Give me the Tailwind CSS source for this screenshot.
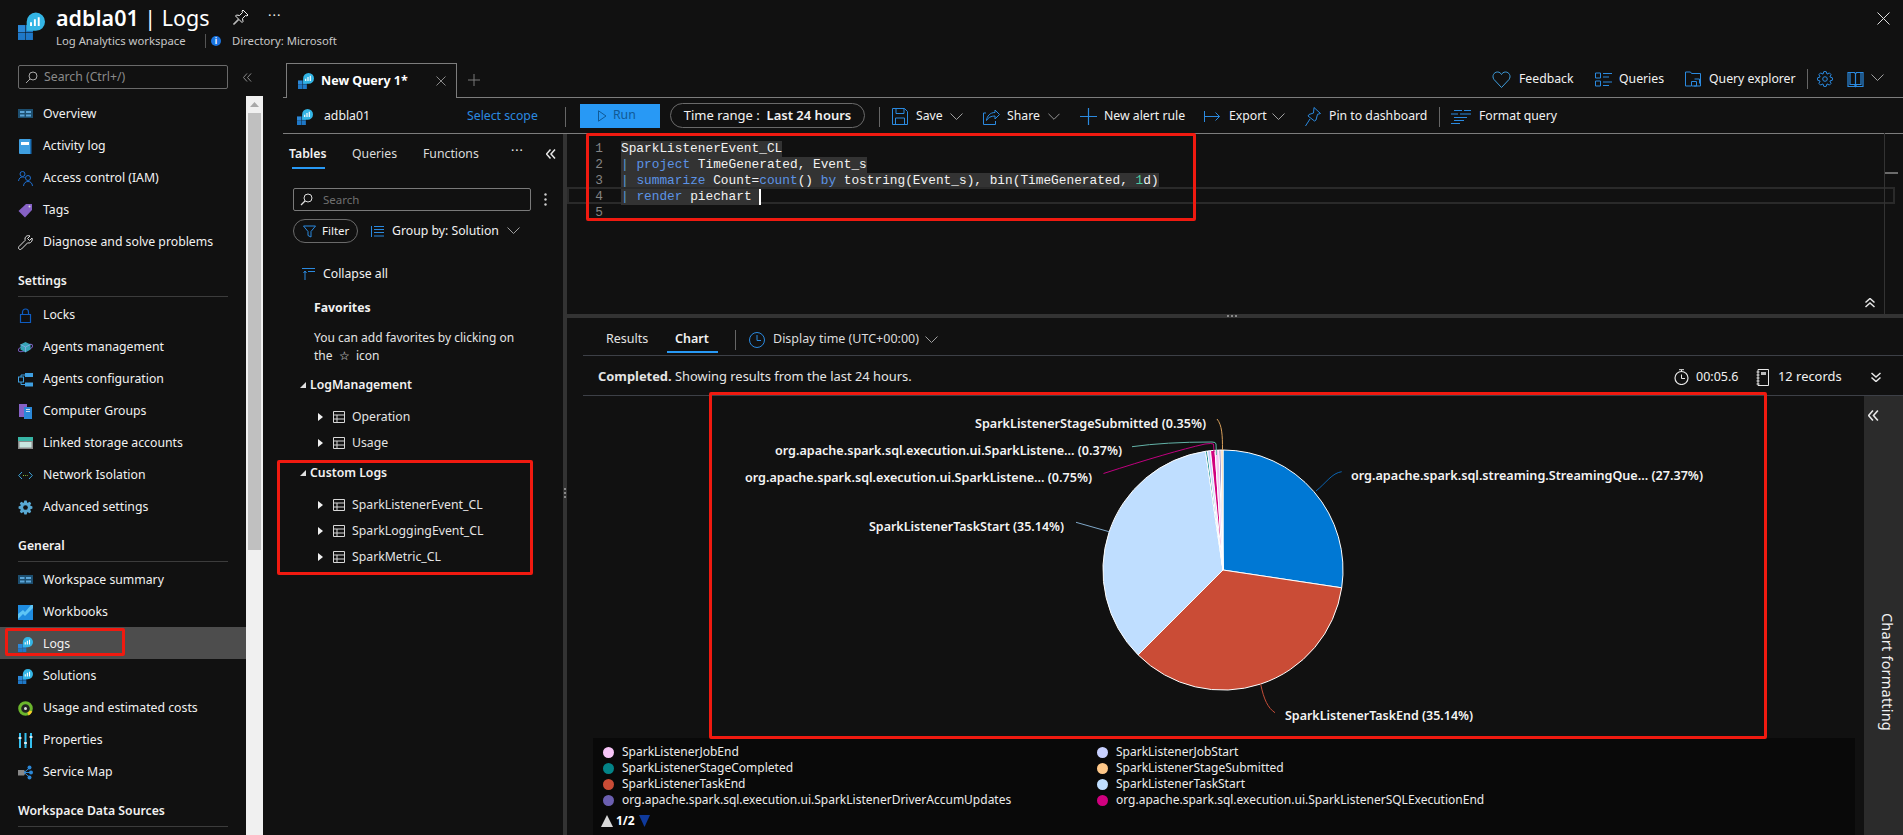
<!DOCTYPE html>
<html lang="en"><head><meta charset="utf-8"><title>adbla01 | Logs</title>
<script src="https://cdn.jsdelivr.net/npm/@tailwindcss/browser@4"></script></head>
<body class="bg-[#111111]">
<svg width="0" height="0" class="absolute">
<defs>
<symbol id="logo" viewBox="0 0 28 28"><rect x="0" y="13" width="7.5" height="7.5" fill="#2b88d8"/><rect x="0" y="21" width="7.5" height="7.5" fill="#1f78c8"/><rect x="8" y="21" width="7.5" height="7.5" fill="#1f78c8"/><rect x="8" y="13" width="7.5" height="7.5" fill="#1f78c8"/><path d="M18.5 0a9.5 9.5 0 0 1 0 19H9v-9.5A9.5 9.5 0 0 1 18.5 0z" fill="#33b5e5"/><path d="M13.500 14V10M17.500 14V7M21.500 14V5" stroke="#fff" stroke-width="2"/></symbol>
<symbol id="tbl" viewBox="0 0 12 12"><path d="M.5.5h11v11H.5zM.5 4h11M.5 8h11M4 4v7.500" fill="none" stroke="#d8d8d8" stroke-width="1"/></symbol>
<symbol id="chev" viewBox="0 0 13 8"><path d="M.5.5l6 6 6-6" fill="none" stroke="#a0a0a0" stroke-width="1"/></symbol>
<symbol id="dbl" viewBox="0 0 10 10"><path d="M4.500.5L.5 5l4 4.500M9 .5L5 5l4 4.500" fill="none" stroke="#e8e8e8" stroke-width="1.500"/></symbol>
</defs></svg>
<div class="relative w-[1903px] h-[835px] overflow-hidden flex flex-col bg-[#111111] text-[#f2f2f2] text-[12.25px] font-['Noto_Sans',sans-serif]">

<header class="h-[58px] shrink-0 flex pl-[18px] pr-[13px]">
  <svg class="w-[27px] h-[28px] mt-[12px]"><use href="#logo"/></svg>
  <div class="ml-[11px] flex flex-col">
    <div class="flex items-center h-[34px] pt-[2px]">
      <div class="w-[177px] text-[21.500px] text-white whitespace-nowrap"><span class="font-semibold">adbla01</span> | Logs</div>
      <svg class="w-[16px] h-[16px] mt-[-2px]" viewBox="0 0 16 16"><path d="M10 1l5 5-1 1-1.500-.5-3 3 .5 3-1 1-3-3-5 5-.5-.5 5-5-3-3 1-1 3 .5 3-3L9 2z" fill="none" stroke="#f0f0f0" stroke-width="1"/></svg>
      <div class="ml-[19px] mt-[-4px] text-[13px] tracking-[1px]">···</div>
    </div>
    <div class="flex items-center text-[11.300px] text-[#c8c8c8] mt-[-1px]">
      <span class="w-[149px] whitespace-nowrap">Log Analytics workspace</span>
      <span class="w-px h-[14px] bg-[#555]"></span>
      <span class="ml-[5px] w-[10px] h-[10px] rounded-full bg-[#1a73e0] text-white text-[8px] leading-[10px] text-center font-bold">i</span>
      <span class="ml-[11px] whitespace-nowrap">Directory: Microsoft</span>
    </div>
  </div>
  <svg class="ml-auto mt-[12px] w-[13px] h-[13px]" viewBox="0 0 13 13"><path d="M.5.5l12 12M12.500.5l-12 12" stroke="#e0e0e0" stroke-width="1"/></svg>
</header>

<div class="flex flex-1 min-h-0">
  <!-- blade menu -->
  <aside class="w-[246px] shrink-0 flex flex-col">
    <div class="flex items-center pl-[18px] h-[24px] mt-[7px]">
      <div class="w-[210px] shrink-0 h-[24px] border border-[#6a6a6a] rounded-[2px] flex items-center pl-[6px] text-[#8a8a8a]">
        <svg class="w-[13px] h-[13px]" viewBox="0 0 13 13"><circle cx="8" cy="5" r="4" fill="none" stroke="#aaa"/><path d="M5 8l-4 4" stroke="#aaa"/></svg>
        <span class="ml-[6px]">Search (Ctrl+/)</span>
      </div>
      <svg class="ml-[15px] shrink-0 w-[9px] h-[9px]" viewBox="0 0 10 10"><path d="M4.500.5L.5 5l4 4.500M9 .5L5 5l4 4.500" fill="none" stroke="#999" stroke-width="1"/></svg>
    </div>
    <nav class="mt-[8px]">
      <a class="flex items-center h-8 pl-[18px] pt-[2px]"><svg class="w-[15px] h-[15px] mr-[10px]" viewBox="0 0 15 15"><rect y="2" width="15" height="9" fill="#1d4f70"/><path d="M2 4h4.500v2H2zM8 4h5v2H8zM2 7.500h4.500v2H2zM8 7.500h5v2H8z" fill="#5ba5d8"/></svg>Overview</a>
      <a class="flex items-center h-8 pl-[18px] pt-[2px]"><svg class="w-[15px] h-[15px] mr-[10px]" viewBox="0 0 15 15"><rect x="1" width="12" height="15" rx="1" fill="#3f9fe0"/><rect x="3" y="3" width="8" height="3" fill="#fff"/><rect x="12" width="1.500" height="15" fill="#1a6fb5"/></svg>Activity log</a>
      <a class="flex items-center h-8 pl-[18px] pt-[2px]"><svg class="w-[15px] h-[15px] mr-[10px]" viewBox="0 0 15 15"><g fill="none" stroke="#1f6fd0" stroke-width="1"><circle cx="4.500" cy="3" r="2.500"/><path d="M.5 10c.5-3 2-4 4-4 1 0 1.500.2 2 .5"/><circle cx="10" cy="7" r="2.500"/><path d="M5.500 15c.3-3 2-4.500 4.500-4.500s4.200 1.500 4.500 4.500"/></g></svg>Access control (IAM)</a>
      <a class="flex items-center h-8 pl-[18px] pt-[2px]"><svg class="w-[15px] h-[15px] mr-[10px]" viewBox="0 0 15 15"><path d="M8 1h6v6l-7 7.500L.5 8z" fill="#8661c5"/><circle cx="11.500" cy="3.500" r="1" fill="#ddd"/></svg>Tags</a>
      <a class="flex items-center h-8 pl-[18px] pt-[2px]"><svg class="w-[15px] h-[15px] mr-[10px]" viewBox="0 0 15 15"><path d="M14 3l-2.500 2.500-2-2L12 1c-2-1-5 0-5 3 0 .6.100 1 .2 1.300L1 11.500c-1 1-.5 2 0 2.500s1.500 1 2.500 0l6.200-6.200c3 1 5.300-2 4.300-4.800z" fill="none" stroke="#e0e0e0"/></svg>Diagnose and solve problems</a>

      <div class="mx-[18px] mb-px pt-[15px] pb-[6px] leading-[18px] font-semibold border-b border-[#3c3c3c]">Settings</div>
      <a class="flex items-center h-8 pl-[18px] pt-[2px]"><svg class="w-[15px] h-[15px] mr-[10px]" viewBox="0 0 15 15"><path d="M2.500 6.500h10v8h-10zM4.500 6.500V4a3 3 0 0 1 6 0v2.500" fill="none" stroke="#0f5cc0" stroke-width="1.200"/></svg>Locks</a>
      <a class="flex items-center h-8 pl-[18px] pt-[2px]"><svg class="w-[15px] h-[15px] mr-[10px]" viewBox="0 0 15 15"><ellipse cx="7.500" cy="8" rx="7.500" ry="2.500" transform="rotate(-20 7.500 8)" fill="none" stroke="#7a5cc0"/><path d="M7.500 2l5 2.500v5l-5 3-5-3v-5z" fill="#38a5b8"/><path d="M2.500 4.500l5 2.500 5-2.500M7.500 7v5" stroke="#9ae" stroke-width=".7" fill="none"/></svg>Agents management</a>
      <a class="flex items-center h-8 pl-[18px] pt-[2px]"><svg class="w-[15px] h-[15px] mr-[10px]" viewBox="0 0 15 15"><rect x="0.500" y="5" width="5" height="5" fill="none" stroke="#3f9fe0"/><rect x="7" y="1" width="8" height="4" fill="#3f9fe0"/><rect x="7" y="10.500" width="8" height="4" fill="#3f9fe0"/><path d="M3 5V3h4M3 10v2.500h4" fill="none" stroke="#3f9fe0"/></svg>Agents configuration</a>
      <a class="flex items-center h-8 pl-[18px] pt-[2px]"><svg class="w-[15px] h-[15px] mr-[10px]" viewBox="0 0 15 15"><rect x="1" y="0" width="8" height="13" fill="#8661c5"/><rect x="6" y="3" width="8" height="12" fill="#2b88d8"/><path d="M8 5.500h4M8 7.500h4" stroke="#cde" stroke-width="1"/></svg>Computer Groups</a>
      <a class="flex items-center h-8 pl-[18px] pt-[2px]"><svg class="w-[15px] h-[15px] mr-[10px]" viewBox="0 0 15 15"><rect y="1" width="15" height="12" fill="#8a8a8a"/><rect y="1" width="15" height="4" fill="#37b5a5"/><rect x="1.500" y="6" width="12" height="5.500" fill="#c8e6e0"/></svg>Linked storage accounts</a>
      <a class="flex items-center h-8 pl-[18px] pt-[2px]"><svg class="w-[15px] h-[15px] mr-[10px]" viewBox="0 0 15 15"><path d="M4 4L.7 7.500 4 11M11 4l3.300 3.500L11 11" fill="none" stroke="#3fa5dc"/><path d="M5 7.500h5" stroke="#8fc83c" stroke-dasharray="1 1.200"/></svg>Network Isolation</a>
      <a class="flex items-center h-8 pl-[18px] pt-[2px]"><svg class="w-[15px] h-[15px] mr-[10px]" viewBox="0 0 16 16"><path d="M9.170.59L10.030 3.100 12.410 1.930 14.070 3.590 12.900 5.970 15.410 6.830V9.170L12.900 10.030 14.070 12.410 12.410 14.070 10.030 12.900 9.170 15.410H6.830L5.970 12.900 3.590 14.070 1.930 12.410 3.100 10.030.59 9.170V6.830L3.100 5.970 1.930 3.590 3.590 1.930 5.970 3.100 6.830.59z" fill="#58a9d4"/><circle cx="8" cy="8" r="2.500" fill="#111111"/></svg>Advanced settings</a>

      <div class="mx-[18px] mb-px pt-[15px] pb-[6px] leading-[18px] font-semibold border-b border-[#3c3c3c]">General</div>
      <a class="flex items-center h-8 pl-[18px] pt-[2px]"><svg class="w-[15px] h-[15px] mr-[10px]" viewBox="0 0 15 15"><rect y="2" width="15" height="9" fill="#1d4f70"/><path d="M2 4h4.500v2H2zM8 4h5v2H8zM2 7.500h4.500v2H2zM8 7.500h5v2H8z" fill="#5ba5d8"/></svg>Workspace summary</a>
      <a class="flex items-center h-8 pl-[18px] pt-[2px]"><svg class="w-[15px] h-[15px] mr-[10px]" viewBox="0 0 15 15"><rect width="15" height="15" fill="#1f8ce0"/><path d="M0 9l5-4 2 2 6-7h2v3L7 11 5 9l-5 5z" fill="#5ec5f5"/></svg>Workbooks</a>
      <a class="flex items-center h-8 pl-[18px] pt-[2px] bg-[#4d4d4d]"><svg class="w-[15px] h-[15px] mr-[10px]"><use href="#logo"/></svg>Logs</a>
      <a class="flex items-center h-8 pl-[18px] pt-[2px]"><svg class="w-[15px] h-[15px] mr-[10px]"><use href="#logo"/></svg>Solutions</a>
      <a class="flex items-center h-8 pl-[18px] pt-[2px]"><svg class="w-[15px] h-[15px] mr-[10px]" viewBox="0 0 15 15"><circle cx="7.500" cy="7.500" r="5.800" fill="#222" stroke="#6bb52c" stroke-width="3"/><path d="M13 10a5.800 5.800 0 0 1-3 3" fill="none" stroke="#f5cb2a" stroke-width="3"/><circle cx="7.500" cy="7.500" r="1.500" fill="#ddd"/></svg>Usage and estimated costs</a>
      <a class="flex items-center h-8 pl-[18px] pt-[2px]"><svg class="w-[15px] h-[15px] mr-[10px]" viewBox="0 0 15 15"><path d="M2 0v15M7.500 0v15M13 0v15" stroke="#35c0ef" stroke-width="2"/><path d="M.5 5h3M6 10h3M11.500 4h3" stroke="#fff" stroke-width="1.500"/></svg>Properties</a>
      <a class="flex items-center h-8 pl-[18px] pt-[2px]"><svg class="w-[15px] h-[15px] mr-[10px]" viewBox="0 0 15 15"><path d="M0 5h6l2 2.500-2 3H0z" fill="#888"/><path d="M6 7.500l6-5M6 7.500h7M6 7.500l6 5" stroke="#2b88d8"/><circle cx="11.500" cy="2.500" r="2" fill="#2b88d8"/><circle cx="13" cy="7.500" r="2" fill="#2b88d8"/><circle cx="11.500" cy="12.500" r="2" fill="#2b88d8"/></svg>Service Map</a>

      <div class="mx-[18px] pt-[15px] pb-[6px] leading-[18px] font-semibold border-b border-[#3c3c3c] whitespace-nowrap">Workspace Data Sources</div>
    </nav>
  </aside>
  <!-- scrollbar -->
  <div class="w-[17px] shrink-0 mt-[38px] bg-[#f0f0f0] flex flex-col items-center">
    <svg class="mt-[6px] w-[9px] h-[5px]" viewBox="0 0 9 5"><path d="M4.500 0l4.500 5H0z" fill="#a8a8a8"/></svg>
    <div class="mt-[6px] w-[13px] h-[437px] bg-[#c0c0c0]"></div>
  </div>

  <!-- main -->
  <main class="ml-[20px] flex-1 min-w-0 flex flex-col">
    <div class="h-[40px] shrink-0 border-b border-[#7d7d7d] flex items-end pr-[19px]">
      <div class="relative top-px ml-[3px] w-[171px] h-[35px] border border-b-0 border-[#7d7d7d] bg-[#111111] flex items-center pl-[11px]">
        <svg class="w-[16px] h-[16px]"><use href="#logo"/></svg>
        <span class="ml-[7px] font-bold w-[115px] whitespace-nowrap text-white text-[12.500px]">New Query 1*</span>
        <svg class="w-[10px] h-[10px]" viewBox="0 0 10 10"><path d="M.5.5l9 9M9.500.5l-9 9" stroke="#8a8a8a"/></svg>
      </div>
      <svg class="ml-[11px] mb-[11px] w-[12px] h-[12px]" viewBox="0 0 12 12"><path d="M6 0v12M0 6h12" stroke="#7a7a7a"/></svg>
      <div class="flex-1"></div>
      <div class="flex items-center h-[39px] pt-[3px]">
        <svg class="w-[19px] h-[19px]" viewBox="0 0 19 19"><path d="M9.500 17.500L2 9.500C-.5 6 2 2 5.500 2c2 0 3.200 1.200 4 2.500C10.300 3.200 11.500 2 13.500 2 17 2 19.500 6 17 9.500z" fill="none" stroke="#3f9fe0"/></svg>
        <span class="ml-[8px] w-[76px] whitespace-nowrap">Feedback</span>
        <svg class="w-[17px] h-[15px]" viewBox="0 0 17 15"><path d="M.5 1h5v5h-5zM.5 9h5v5h-5z" fill="none" stroke="#2b8ae0"/><path d="M8 1.500h9M8 5h6M8 10h9M8 13.500h6" stroke="#2b8ae0"/></svg>
        <span class="ml-[7px] w-[66px] whitespace-nowrap">Queries</span>
        <svg class="w-[16px] h-[16px]" viewBox="0 0 16 16"><path d="M.5 15V1h5l1 1.500h9V15H9M.5 15H6" fill="none" stroke="#2b8ae0"/><path d="M6.500 10.500h5v4.500h-5zM9.500 8h5v4.500" fill="none" stroke="#2b8ae0"/></svg>
        <span class="ml-[8px] w-[98px] whitespace-nowrap">Query explorer</span>
        <span class="w-px h-[20px] bg-[#666]"></span>
        <svg class="ml-[9px] w-[16px] h-[16px]" viewBox="0 0 16 16"><path d="M9.170.59L10.030 3.100 12.410 1.930 14.070 3.590 12.900 5.970 15.410 6.830V9.170L12.900 10.030 14.070 12.410 12.410 14.070 10.030 12.900 9.170 15.410H6.830L5.970 12.900 3.590 14.070 1.930 12.410 3.100 10.030.59 9.170V6.830L3.100 5.970 1.930 3.590 3.590 1.930 5.970 3.100 6.830.59z" fill="none" stroke="#2b8ae0"/><circle cx="8" cy="8" r="2.300" fill="none" stroke="#2b8ae0"/></svg>
        <svg class="ml-[14px] w-[17px] h-[17px]" viewBox="0 0 17 17"><path d="M1 1.500h6.500L8.500 3l1-1.500H16V15.500H1zM8.500 3v12.500M3 1.500V13.500H7.500L8.500 15.500 9.500 13.500H14V1.500" fill="none" stroke="#2b8ae0" stroke-width="1.200"/></svg>
        <svg class="ml-[7px] mb-[3px] w-[13px] h-[8px]"><use href="#chev"/></svg>
      </div>
    </div>

    <div class="h-[36px] shrink-0 border-b border-[#7d7d7d] flex items-center pt-[2px] whitespace-nowrap">
      <svg class="ml-[14px] w-[16px] h-[16px]"><use href="#logo"/></svg>
      <span class="ml-[11px] w-[143px]">adbla01</span>
      <span class="w-[98px] text-[#2b8ae0]">Select scope</span>
      <span class="w-px h-[20px] bg-[#666]"></span>
      <div class="ml-[14px] mt-[-2px] w-[80px] h-[24px] bg-[#2899f5] flex items-center pl-[18px] text-[#105a96]">
        <svg class="w-[9px] h-[12px]" viewBox="0 0 9 12"><path d="M.5.8l7.500 5.200L.5 11.200z" fill="none" stroke="#105a96"/></svg>
        <span class="ml-[6px]">Run</span>
      </div>
      <div class="ml-[10px] mt-[-2px] w-[195px] h-[25px] rounded-full border border-[#6a6a6a] flex items-center justify-center text-[13px]"><span>Time range :&nbsp;&nbsp;<span class="font-semibold">Last 24 hours</span></span></div>
      <span class="ml-[14px] w-px h-[20px] bg-[#666]"></span>
      <svg class="ml-[12px] w-[16px] h-[17px]" viewBox="0 0 16 17"><path d="M.5.5h12l3 3v13H.5zM4 .5v5h8v-5M3.500 16.500V10h9v6.500" fill="none" stroke="#2b8ae0"/></svg>
      <span class="ml-[8px] w-[34px]">Save</span>
      <svg class="w-[13px] h-[8px]"><use href="#chev"/></svg>
      <svg class="ml-[20px] w-[17px] h-[16px]" viewBox="0 0 17 16"><path d="M12 1l4.500 4.500L12 10V7C8 7 5 8.500 3.500 11.500 4 7 7 3.500 12 3.500zM3 4H.5v11.500h12V12" fill="none" stroke="#2b8ae0"/></svg>
      <span class="ml-[7px] w-[41px]">Share</span>
      <svg class="w-[12px] h-[8px]"><use href="#chev"/></svg>
      <svg class="ml-[20px] w-[17px] h-[17px]" viewBox="0 0 17 17"><path d="M8.500 0v17M0 8.500h17" stroke="#2b8ae0" stroke-width="1.200"/></svg>
      <span class="ml-[7px] w-[100px]">New alert rule</span>
      <svg class="w-[17px] h-[11px]" viewBox="0 0 17 11"><path d="M.5 0v11M.5 5.500h15M11.500 1.500l4 4-4 4" fill="none" stroke="#2b8ae0"/></svg>
      <span class="ml-[8px] w-[43px]">Export</span>
      <svg class="w-[13px] h-[8px]"><use href="#chev"/></svg>
      <svg class="ml-[20px] w-[16px] h-[20px]" viewBox="0 0 16 20"><path d="M9 .5l6.500 6-3 .8-1.500 5.700-1.500 1L3 9l1-1.500L8.500 6zM5 12L.5 19" fill="none" stroke="#2b8ae0"/></svg>
      <span class="ml-[8px] w-[110px]">Pin to dashboard</span>
      <span class="w-px h-[20px] bg-[#666]"></span>
      <svg class="ml-[11px] w-[20px] h-[14px]" viewBox="0 0 20 14"><path d="M3 .5h8M13 .5h7M0 4h7M9 4h11M3 7.500h13M3 10.500h10M0 13.500h9" stroke="#2b8ae0"/></svg>
      <span class="ml-[8px]">Format query</span>
    </div>

    <div class="flex flex-1 min-h-0">
      <!-- schema pane -->
      <section class="w-[280px] shrink-0 flex flex-col whitespace-nowrap">
        <div class="h-[36px] flex items-center pl-[6px] pt-[4px] relative">
          <span class="w-[63px] font-semibold relative"><span>Tables</span><span class="absolute left-[3px] top-[22px] w-[33px] h-[2px] bg-[#2899f5]"></span></span>
          <span class="w-[71px] text-[#dcdcdc]">Queries</span>
          <span class="w-[88px] text-[#dcdcdc]">Functions</span>
          <span class="w-[35px] mt-[-5px] tracking-[1px]">···</span>
          <svg class="w-[10px] h-[10px]"><use href="#dbl"/></svg>
        </div>
        <div class="ml-[10px] mt-[18px] flex items-center">
          <div class="w-[238px] h-[23px] border border-[#7a7a7a] rounded-[2px] flex items-center pl-[6px] text-[#6f6f6f] text-[11.500px]">
            <svg class="w-[13px] h-[13px]" viewBox="0 0 13 13"><circle cx="8" cy="5" r="4" fill="none" stroke="#ddd"/><path d="M5 8l-4 4" stroke="#ddd" stroke-width="1.300"/></svg>
            <span class="ml-[10px]">Search</span>
          </div>
          <svg class="ml-[13px] w-[3px] h-[13px]" viewBox="0 0 3 13"><circle cx="1.500" cy="1.500" r="1.200" fill="#ccc"/><circle cx="1.500" cy="6.500" r="1.200" fill="#ccc"/><circle cx="1.500" cy="11.500" r="1.200" fill="#ccc"/></svg>
        </div>
        <div class="ml-[10px] mt-[8px] flex items-center">
          <div class="w-[65px] h-[24px] rounded-full border border-[#6a6a6a] flex items-center pl-[9px] text-[11.500px]">
            <svg class="w-[13px] h-[13px]" viewBox="0 0 13 13"><path d="M.5 1h12L8 6.500V12L5 10.500v-4z" fill="none" stroke="#2b8ae0"/></svg>
            <span class="ml-[6px]">Filter</span>
          </div>
          <svg class="ml-[13px] w-[13px] h-[11px]" viewBox="0 0 13 11"><path d="M.5 0v11M3 .5h10M3 3.500h10M3 6.500h10M3 10h10" stroke="#2b8ae0"/></svg>
          <span class="ml-[8px] w-[115px]">Group by: Solution</span>
          <svg class="w-[13px] h-[8px]"><use href="#chev"/></svg>
        </div>
        <div class="ml-[19px] mt-[20px] h-[20px] pt-[2px] flex items-center">
          <svg class="w-[13px] h-[12px]" viewBox="0 0 13 12"><path d="M0 .5h13M3 3v9M1.500 5L3 3l1.500 2M6 3.500h7" fill="none" stroke="#2b8ae0"/></svg>
          <span class="ml-[8px]">Collapse all</span>
        </div>
        <div class="ml-[31px] mt-[14px] h-[20px] pt-px leading-[20px] font-bold">Favorites</div>
        <div class="ml-[31px] mt-[12px] leading-[18px] text-[12px] text-[#e4e4e4]">You can add favorites by clicking on<br>the &nbsp;☆&nbsp; icon</div>
        <div class="ml-[17px] mt-[9px] h-[20px] pt-[2px] flex items-center font-semibold"><span class="w-0 h-0 border-l-[6px] border-l-transparent border-b-[6px] border-b-[#e0e0e0]"></span><span class="ml-[4px]">LogManagement</span></div>
        <div class="mt-[10px] ml-[35px] h-[26px] flex items-center"><span class="w-0 h-0 border-y-[4px] border-y-transparent border-l-[5px] border-l-[#f0f0f0]"></span><svg class="ml-[10px] w-[12px] h-[12px]"><use href="#tbl"/></svg><span class="ml-[7px] text-[#e4e4e4]">Operation</span></div>
        <div class="ml-[35px] h-[26px] flex items-center"><span class="w-0 h-0 border-y-[4px] border-y-transparent border-l-[5px] border-l-[#f0f0f0]"></span><svg class="ml-[10px] w-[12px] h-[12px]"><use href="#tbl"/></svg><span class="ml-[7px] text-[#e4e4e4]">Usage</span></div>
        <div class="ml-[17px] mt-[6px] h-[20px] pt-[2px] flex items-center font-semibold"><span class="w-0 h-0 border-l-[6px] border-l-transparent border-b-[6px] border-b-[#e0e0e0]"></span><span class="ml-[4px]">Custom Logs</span></div>
        <div class="mt-[10px] ml-[35px] h-[26px] flex items-center"><span class="w-0 h-0 border-y-[4px] border-y-transparent border-l-[5px] border-l-[#f0f0f0]"></span><svg class="ml-[10px] w-[12px] h-[12px]"><use href="#tbl"/></svg><span class="ml-[7px] text-[#e4e4e4]">SparkListenerEvent_CL</span></div>
        <div class="ml-[35px] h-[26px] flex items-center"><span class="w-0 h-0 border-y-[4px] border-y-transparent border-l-[5px] border-l-[#f0f0f0]"></span><svg class="ml-[10px] w-[12px] h-[12px]"><use href="#tbl"/></svg><span class="ml-[7px] text-[#e4e4e4]">SparkLoggingEvent_CL</span></div>
        <div class="ml-[35px] h-[26px] flex items-center"><span class="w-0 h-0 border-y-[4px] border-y-transparent border-l-[5px] border-l-[#f0f0f0]"></span><svg class="ml-[10px] w-[12px] h-[12px]"><use href="#tbl"/></svg><span class="ml-[7px] text-[#e4e4e4]">SparkMetric_CL</span></div>
      </section>
      <!-- vertical splitter -->
      <div class="w-[4px] shrink-0 bg-[#333333] flex flex-col items-center gap-[2px] pt-[354px]"><i class="w-[2px] h-[2px] bg-[#888]"></i><i class="w-[2px] h-[2px] bg-[#888]"></i><i class="w-[2px] h-[2px] bg-[#888]"></i></div>

      <div class="flex-1 min-w-0 flex flex-col">
        <!-- editor -->
        <div class="relative h-[180px] shrink-0 pt-[7px] font-['Liberation_Mono',monospace] text-[12.800px] leading-[16px]">
          <div class="flex h-[16px]"><span class="w-[36px] text-right text-[#858585]">1</span><span class="ml-[18px] bg-[#333333] whitespace-pre">SparkListenerEvent_CL</span></div>
          <div class="flex h-[16px]"><span class="w-[36px] text-right text-[#858585]">2</span><span class="ml-[18px] bg-[#333333] whitespace-pre"><span class="text-[#5b9bd5]">|</span> <span class="text-[#5c93e6]">project</span> TimeGenerated, Event_s</span></div>
          <div class="flex h-[16px]"><span class="w-[36px] text-right text-[#858585]">3</span><span class="ml-[18px] bg-[#333333] whitespace-pre"><span class="text-[#5b9bd5]">|</span> <span class="text-[#5c93e6]">summarize</span> Count=<span class="text-[#5c93e6]">count</span>() <span class="text-[#5c93e6]">by</span> tostring(Event_s), bin(TimeGenerated, <span class="text-[#4ec9a0]">1</span>d)</span></div>
          <div class="flex h-[16px] relative z-10"><span class="w-[36px] text-right text-[#858585]">4</span><span class="ml-[18px] bg-[#333333] whitespace-pre"><span class="text-[#5b9bd5]">|</span> <span class="text-[#5c93e6]">render</span> piechart </span><span class="w-[2px] h-[16px] bg-white"></span></div>
          <div class="flex h-[16px]"><span class="w-[36px] text-right text-[#858585]">5</span></div>
          <div class="absolute left-0 top-[53px] w-[1328px] h-[17px] border-2 border-[#2a2a2a]"></div>
          <div class="absolute left-[1317px] top-[-1px] w-px h-[181px] bg-[#333333]"></div>
          <div class="absolute left-[1318px] top-[38px] w-[13px] h-[2px] bg-[#6b6b6b]"></div>
          <svg class="absolute left-[1298px] top-[164px] w-[10px] h-[10px]" viewBox="0 0 10 10"><path d="M.5 4.500L5 .5l4.500 4M.5 9L5 5l4.500 4" fill="none" stroke="#e8e8e8" stroke-width="1.500"/></svg>
        </div>
        <!-- horizontal splitter -->
        <div class="h-[4px] shrink-0 bg-[#333333] flex justify-center items-center gap-[2px] pr-[7px]"><i class="w-[2px] h-[2px] bg-[#888]"></i><i class="w-[2px] h-[2px] bg-[#888]"></i><i class="w-[2px] h-[2px] bg-[#888]"></i></div>
        <!-- results -->
        <div class="flex-1 min-h-0 pl-[16px] flex flex-col whitespace-nowrap">
          <div class="h-[38px] shrink-0 border-b border-[#3d4047] flex items-center pt-[6px]">
            <span class="ml-[23px] w-[69px] text-[#e4e4e4] text-[12.500px]">Results</span>
            <span class="w-[60px] font-semibold relative text-[12.500px]">Chart<span class="absolute left-[-8px] top-[21px] w-[51px] h-[2px] bg-[#2899f5]"></span></span>
            <span class="w-px h-[20px] bg-[#666]"></span>
            <svg class="ml-[13px] w-[16px] h-[16px]" viewBox="0 0 16 16"><circle cx="8" cy="8" r="7.500" fill="none" stroke="#2b8ae0"/><path d="M8 3v5.500h4" fill="none" stroke="#2b8ae0"/></svg>
            <span class="ml-[8px] w-[152px] text-[#dcdcdc] text-[12.500px]">Display time (UTC+00:00)</span>
            <svg class="w-[13px] h-[8px]"><use href="#chev"/></svg>
          </div>
          <div class="h-[40px] shrink-0 border-b border-[#3d4047] flex items-center pl-[15px] pt-[3px] text-[12.900px]">
            <span class="w-[1076px] text-[#e4e4e4]"><span class="font-bold">Completed.</span> Showing results from the last 24 hours.</span>
            <svg class="w-[15px] h-[16px]" viewBox="0 0 15 16"><circle cx="7.500" cy="9" r="6.500" fill="none" stroke="#e8e8e8" stroke-width="1.200"/><path d="M5 .7h5M7.500 1v2M7.500 5.500V9.500H11" fill="none" stroke="#e8e8e8"/></svg>
            <span class="ml-[7px] w-[60px] text-[12.500px]">00:05.6</span>
            <svg class="w-[13px] h-[17px]" viewBox="0 0 13 17"><path d="M2 .5h10.500v16H2zM.5 3h3M.5 6h3M.5 9h3M.5 12h3M.5 15h3" fill="none" stroke="#e8e8e8"/><rect x="5" y="3" width="5" height="3" fill="#bbb"/></svg>
            <span class="ml-[9px] w-[93px]">12 records</span>
            <svg class="w-[10px] h-[10px]" viewBox="0 0 10 10"><path d="M.5 1L5 5l4.500-4M.5 5.500L5 9.500l4.500-4" fill="none" stroke="#e8e8e8" stroke-width="1.500"/></svg>
          </div>
          <div class="flex-1 min-h-0 flex">
            <div class="relative flex-1 min-w-0 flex flex-col justify-end">
              <svg class="absolute left-0 top-0 overflow-visible" width="1281" height="342" viewBox="583 396 1281 342">
                <g stroke="#ffffff" stroke-width="1">
                  <path d="M1223 570V450A120 120 0 0 1 1341.700 587.800z" fill="#0078d4"/>
                  <path d="M1223 570L1341.700 587.800A120 120 0 0 1 1138.100 654.900z" fill="#ca4c36"/>
                  <path d="M1223 570L1138.100 654.900A120 120 0 0 1 1205.500 451.300z" fill="#bfdeff"/>
                  <path d="M1223 570L1205.500 451.300L1207.500 451z" fill="#038387"/>
                  <path d="M1223 570L1207.500 451L1210.500 450.700z" fill="#c8d0ff"/>
                  <path d="M1223 570L1210.500 450.700L1215 450.300z" fill="#d1007f"/>
                  <path d="M1223 570L1215 450.300L1219 450.100z" fill="#f5c6f5"/>
                  <path d="M1223 570L1219 450.100L1221 450z" fill="#6b5fb0"/>
                  <path d="M1223 570L1221 450L1223 450z" fill="#ffc889"/>
                </g>
                <g fill="none" stroke-width="1">
                  <path d="M1222.500 450C1222.500 435 1222 425 1217 419" stroke="#d9a05b"/>
                  <path d="M1216.500 455L1216 444Q1216 442 1212 442Q1165 442 1132 446.700" stroke="#63b3a8"/>
                  <path d="M1214 452L1213.500 444Q1212 443 1205 444Q1170 452 1103.500 473.500" stroke="#c0007f"/>
                  <path d="M1316 491C1326 483 1332 473 1341.700 471.700" stroke="#0b63b0"/>
                  <path d="M1109 531.700L1076 522.300" stroke="#7fa8c9"/>
                  <path d="M1260.700 684.300C1264 700 1268 708 1275 712.700" stroke="#c44d38"/>
                </g>
                <g fill="#f4f4f4" class="font-semibold text-[12px]">
                  <text x="975" y="428" textLength="231" lengthAdjust="spacingAndGlyphs">SparkListenerStageSubmitted (0.35%)</text>
                  <text x="775" y="455" textLength="347" lengthAdjust="spacingAndGlyphs">org.apache.spark.sql.execution.ui.SparkListene... (0.37%)</text>
                  <text x="745" y="482" textLength="347" lengthAdjust="spacingAndGlyphs">org.apache.spark.sql.execution.ui.SparkListene... (0.75%)</text>
                  <text x="1351" y="480" textLength="352" lengthAdjust="spacingAndGlyphs">org.apache.spark.sql.streaming.StreamingQue... (27.37%)</text>
                  <text x="869" y="531" textLength="195" lengthAdjust="spacingAndGlyphs">SparkListenerTaskStart (35.14%)</text>
                  <text x="1285" y="720" textLength="188" lengthAdjust="spacingAndGlyphs">SparkListenerTaskEnd (35.14%)</text>
                </g>
              </svg>
              <div class="ml-[10px] w-[1262px] h-[97px] shrink-0 bg-[#090909] pl-[10px] pt-[6px] text-[12px] text-[#ececec]">
                <div class="grid grid-cols-[494px_1fr] auto-rows-[16px]">
                  <div class="flex items-center"><span class="w-[11px] h-[11px] rounded-full bg-[#f7c5f7] mr-[8px]"></span>SparkListenerJobEnd</div>
                  <div class="flex items-center"><span class="w-[11px] h-[11px] rounded-full bg-[#c8d0ff] mr-[8px]"></span>SparkListenerJobStart</div>
                  <div class="flex items-center"><span class="w-[11px] h-[11px] rounded-full bg-[#038387] mr-[8px]"></span>SparkListenerStageCompleted</div>
                  <div class="flex items-center"><span class="w-[11px] h-[11px] rounded-full bg-[#ffc889] mr-[8px]"></span>SparkListenerStageSubmitted</div>
                  <div class="flex items-center"><span class="w-[11px] h-[11px] rounded-full bg-[#ca4c36] mr-[8px]"></span>SparkListenerTaskEnd</div>
                  <div class="flex items-center"><span class="w-[11px] h-[11px] rounded-full bg-[#bfdeff] mr-[8px]"></span>SparkListenerTaskStart</div>
                  <div class="flex items-center"><span class="w-[11px] h-[11px] rounded-full bg-[#6b5fb0] mr-[8px]"></span>org.apache.spark.sql.execution.ui.SparkListenerDriverAccumUpdates</div>
                  <div class="flex items-center"><span class="w-[11px] h-[11px] rounded-full bg-[#d1007f] mr-[8px]"></span>org.apache.spark.sql.execution.ui.SparkListenerSQLExecutionEnd</div>
                </div>
                <div class="flex items-center mt-[6px] ml-[-2px] h-[14px] font-bold text-white text-[12px]">
                  <svg class="w-[12px] h-[12px]" viewBox="0 0 12 12"><path d="M6 0l6 12H0z" fill="#d8d8d8"/></svg>
                  <span class="ml-[3px] w-[23px]">1/2</span>
                  <svg class="w-[11px] h-[12px]" viewBox="0 0 11 12"><path d="M5.500 12L11 0H0z" fill="#0f3a9c"/></svg>
                </div>
              </div>
            </div>
            <!-- chart formatting -->
            <div class="w-[39px] shrink-0 bg-[#2b2b2b] flex flex-col items-start">
              <svg class="ml-[4px] mt-[14px] w-[11px] h-[11px]"><use href="#dbl"/></svg>
              <span class="ml-[12px] mt-[192px] [writing-mode:vertical-rl] text-[14.500px] tracking-[.2px]">Chart formatting</span>
            </div>
          </div>
        </div>
      </div>
    </div>
  </main>
</div>

<!-- red annotation rectangles -->
<div class="absolute left-[5px] top-[628px] w-[120px] h-[28px] border-[3px] border-[#f01a10] rounded-[2px]"></div>
<div class="absolute left-[277px] top-[460px] w-[256px] h-[115px] border-[3px] border-[#f01a10] rounded-[2px]"></div>
<div class="absolute left-[586px] top-[133px] w-[610px] h-[88px] border-[3px] border-[#f01a10] rounded-[2px]"></div>
<div class="absolute left-[709px] top-[392px] w-[1058px] h-[347px] border-[3px] border-[#f01a10] rounded-[2px]"></div>
</div>
</body></html>
